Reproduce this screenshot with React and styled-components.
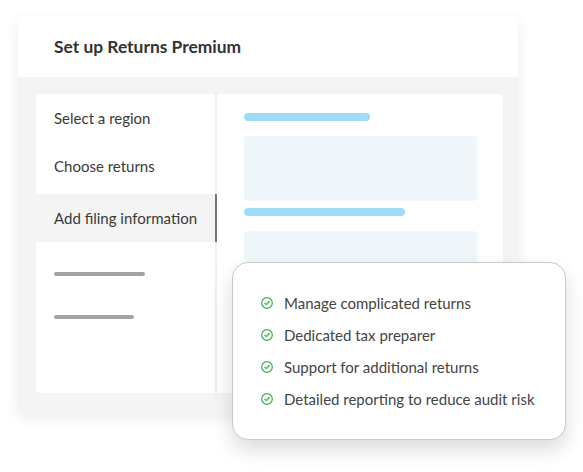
import React from 'react';
import styled, { createGlobalStyle } from 'styled-components';

const GlobalStyle = createGlobalStyle`
  body {
    margin: 0;
    background: #ffffff;
    font-family: "Lato", "Noto Sans", sans-serif;
  }
`;

const Page = styled.div`
  position: relative;
  width: 583px;
  height: 472px;
  padding: 16px 0 0 18px;
  box-sizing: border-box;
`;

const Card = styled.div`
  width: 500px;
  border-radius: 8px;
  overflow: hidden;
  box-shadow: 0 4px 14px rgba(0, 0, 0, 0.08);
`;

const Header = styled.div`
  height: 61px;
  background: #ffffff;
  display: flex;
  align-items: center;
  padding-left: 36px;
  font-size: 17.4px;
  font-weight: 700;
  color: #333333;
`;

const Body = styled.div`
  height: 337px;
  background: #f4f4f4;
  padding: 17px 15px 21px 18px;
  box-sizing: border-box;
  display: flex;
`;

const Nav = styled.div`
  width: 179px;
  background: #ffffff;
  border-right: 2px solid #eeeeee;
  border-radius: 4px 0 0 4px;
  display: flex;
  flex-direction: column;
`;

const NavItem = styled.div`
  height: 48px;
  display: flex;
  align-items: center;
  padding-left: 18px;
  font-size: 15px;
  color: #3a3a3a;
  margin-top: ${(p) => (p.$active ? '4px' : '0')};
  margin-right: ${(p) => (p.$active ? '-2px' : '0')};
  background: ${(p) => (p.$active ? '#f4f4f4' : 'transparent')};
  border-right: ${(p) => (p.$active ? '2px solid #757575' : 'none')};
`;

const GreyLine = styled.div`
  margin-left: 18px;
  margin-top: ${(p) => p.$top}px;
  width: ${(p) => p.$width}px;
  height: 4px;
  border-radius: 2px;
  background: #a3a3a3;
`;

const Content = styled.div`
  flex: 1;
  background: #ffffff;
  border-radius: 0 4px 4px 0;
  padding: 19px 0 0 27px;
  display: flex;
  flex-direction: column;
`;

const BlueLine = styled.div`
  width: ${(p) => p.$width}px;
  height: 8px;
  border-radius: 4px;
  background: #9edcf8;
  margin-top: ${(p) => p.$top}px;
`;

const Block = styled.div`
  width: 233px;
  height: 65px;
  border-radius: 4px;
  background: #eff7fb;
  margin-top: 15px;
`;

const Popup = styled.div`
  position: absolute;
  left: 232px;
  top: 262px;
  width: 334px;
  box-sizing: border-box;
  padding: 24px 0 24px 28px;
  background: #ffffff;
  border: 1px solid #c9c9c9;
  border-radius: 16px;
  box-shadow: 0 10px 20px rgba(0, 0, 0, 0.14);
`;

const Feature = styled.div`
  height: 32px;
  display: flex;
  align-items: center;
  gap: 11px;
  font-size: 15px;
  color: #444444;
`;

const Check = () => (
  <svg width="12" height="12" viewBox="0 0 12 12" fill="none">
    <circle cx="6" cy="6" r="5.3" stroke="#3fae49" strokeWidth="1.2" />
    <path d="M3.7 6.1 L5.2 7.6 L8.3 4.5" stroke="#3fae49" strokeWidth="1.2" strokeLinecap="round" strokeLinejoin="round" />
  </svg>
);

const features = [
  'Manage complicated returns',
  'Dedicated tax preparer',
  'Support for additional returns',
  'Detailed reporting to reduce audit risk',
];

const App = () => {
  return (
    <Page>
      <GlobalStyle />
      <Card>
        <Header>Set up Returns Premium</Header>
        <Body>
          <Nav>
            <NavItem>Select a region</NavItem>
            <NavItem>Choose returns</NavItem>
            <NavItem $active>Add filing information</NavItem>
            <GreyLine $top={30} $width={91} />
            <GreyLine $top={39} $width={80} />
          </Nav>
          <Content>
            <BlueLine $top={0} $width={126} />
            <Block />
            <BlueLine $top={7} $width={161} />
            <Block />
          </Content>
        </Body>
      </Card>
      <Popup>
        {features.map((f) => (
          <Feature key={f}>
            <Check />
            {f}
          </Feature>
        ))}
      </Popup>
    </Page>
  );
};

export default App;
